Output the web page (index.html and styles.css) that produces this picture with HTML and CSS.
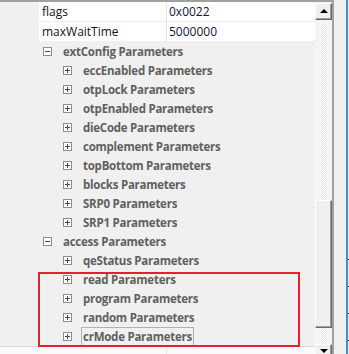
FILE: index.html
```html
<!DOCTYPE html>
<html lang="en">
<head>
  <meta charset="UTF-8" />
  <title>Property Grid</title>
  <link rel="stylesheet" href="styles.css">
</head>
<body>
  <div class="window">
    <div class="pane">
      <div class="grid">
        <div class="prop-row">
          <div class="prop-name">flags</div>
          <div class="prop-value">0x0022</div>
        </div>
        <div class="prop-row">
          <div class="prop-name">maxWaitTime</div>
          <div class="prop-value">5000000</div>
        </div>

        <div class="tree">
          <div class="node level1"><span class="box minus"></span><span class="label">extConfig Parameters</span></div>
          <div class="node level2"><span class="box plus"></span><span class="label">eccEnabled Parameters</span></div>
          <div class="node level2"><span class="box plus"></span><span class="label">otpLock Parameters</span></div>
          <div class="node level2"><span class="box plus"></span><span class="label">otpEnabled Parameters</span></div>
          <div class="node level2"><span class="box plus"></span><span class="label">dieCode Parameters</span></div>
          <div class="node level2"><span class="box plus"></span><span class="label">complement Parameters</span></div>
          <div class="node level2"><span class="box plus"></span><span class="label">topBottom Parameters</span></div>
          <div class="node level2"><span class="box plus"></span><span class="label">blocks Parameters</span></div>
          <div class="node level2"><span class="box plus"></span><span class="label">SRP0 Parameters</span></div>
          <div class="node level2"><span class="box plus"></span><span class="label">SRP1 Parameters</span></div>
          <div class="node level1"><span class="box minus"></span><span class="label">access Parameters</span></div>
          <div class="node level2"><span class="box plus"></span><span class="label">qeStatus Parameters</span></div>
          <div class="node level2"><span class="box plus"></span><span class="label">read Parameters</span></div>
          <div class="node level2"><span class="box plus"></span><span class="label">program Parameters</span></div>
          <div class="node level2"><span class="box plus"></span><span class="label">random Parameters</span></div>
          <div class="node level2"><span class="box plus"></span><span class="label focused">crMode Parameters</span></div>
        </div>

        <div class="prop-row next-row">
          <div class="prop-name"></div>
          <div class="prop-value"></div>
        </div>

        <div class="highlight"></div>
      </div>

      <div class="scrollbar">
        <div class="sb-btn"><span class="arrow up"></span></div>
        <div class="sb-thumb"></div>
        <div class="sb-btn down"><span class="arrow dn"></span></div>
      </div>
    </div>

    <div class="gutter"></div>
    <div class="ruler">
      <div class="tick t1"></div>
      <div class="tick"></div>
      <div class="tick"></div>
      <div class="tick"></div>
    </div>
  </div>
</body>
</html>
```

FILE: styles.css
```css
html, body {
  margin: 0;
  padding: 0;
}
body {
  width: 349px;
  height: 354px;
  overflow: hidden;
  background: #f0f0f0;
  font-family: 'Open Sans', 'Noto Sans', sans-serif;
  font-size: 12px;
}
.window {
  display: flex;
  height: 354px;
}
.pane {
  display: flex;
  width: 332px;
  border-top: 2px solid #a0a0a0;
  border-right: 2px solid #a0a0a0;
}
.grid {
  position: relative;
  width: 315px;
  background: #f0f0f0;
}
.prop-row {
  display: flex;
  height: 19px;
  margin-left: 39px;
  background: #fff;
  border-bottom: 1px solid #f0f0f0;
  line-height: 19px;
  color: #141414;
}
.prop-name {
  width: 124px;
  padding-left: 3px;
  border-right: 1px solid #e6e6e6;
}
.prop-value {
  padding-left: 2px;
  color: #10143a;
}
.tree {
  display: flex;
  flex-direction: column;
}
.node {
  display: flex;
  align-items: center;
  height: 19px;
  font-size: 11.5px;
  font-weight: bold;
  letter-spacing: -0.25px;
  color: #606060;
}
.level1 {
  padding-left: 43px;
}
.level2 {
  padding-left: 63px;
}
.label {
  margin-left: 9px;
  padding: 0 1px;
  line-height: 17px;
  border: 1px solid transparent;
}
.focused {
  border-color: #b0b0b0;
}
.box {
  position: relative;
  width: 7px;
  height: 7px;
  border: 1px solid #8d8d8d;
  background: #fff;
}
.box::before {
  content: "";
  position: absolute;
  left: 1px;
  top: 3px;
  width: 5px;
  height: 1px;
  background: #3e4a72;
}
.plus::after {
  content: "";
  position: absolute;
  left: 3px;
  top: 1px;
  width: 1px;
  height: 5px;
  background: #3e4a72;
}
.next-row {
  margin-left: 0;
  height: 12px;
  border-top: 1px solid #d8d8d8;
  background: #fafafa;
}
.next-row .prop-name {
  width: 163px;
}
.highlight {
  position: absolute;
  left: 38px;
  top: 270px;
  width: 258px;
  height: 71px;
  border: 2px solid #e8202a;
}
.scrollbar {
  display: flex;
  flex-direction: column;
  width: 17px;
  padding-top: 1px;
  background: repeating-conic-gradient(#ffffff 0 25%, #ebebeb 0 50%) 0 0 / 2px 2px;
}
.sb-btn, .sb-thumb {
  flex-shrink: 0;
  box-sizing: border-box;
  background: #f0f0f0;
  border-top: 1px solid #fff;
  border-left: 1px solid #fff;
  border-right: 1px solid #696969;
  border-bottom: 1px solid #696969;
  box-shadow: inset -1px -1px 0 #a0a0a0;
}
.sb-btn {
  display: flex;
  align-items: center;
  justify-content: center;
  height: 17px;
}
.sb-thumb {
  height: 128px;
  margin-top: 180px;
}
.sb-btn.down {
  margin-top: 16px;
}
.arrow {
  width: 0;
  height: 0;
  border-left: 4px solid transparent;
  border-right: 4px solid transparent;
}
.arrow.up {
  border-bottom: 4px solid #000;
  margin-top: -1px;
}
.arrow.dn {
  border-top: 4px solid #000;
  margin-top: -3px;
}
.gutter {
  width: 12px;
}
.ruler {
  display: flex;
  flex-direction: column;
  width: 1px;
  border-left: 2px solid #3a8ee0;
}
.tick {
  width: 2px;
  height: 1px;
  margin-top: 26px;
  background: #333;
}
.tick.t1 {
  margin-top: 259px;
}
```
